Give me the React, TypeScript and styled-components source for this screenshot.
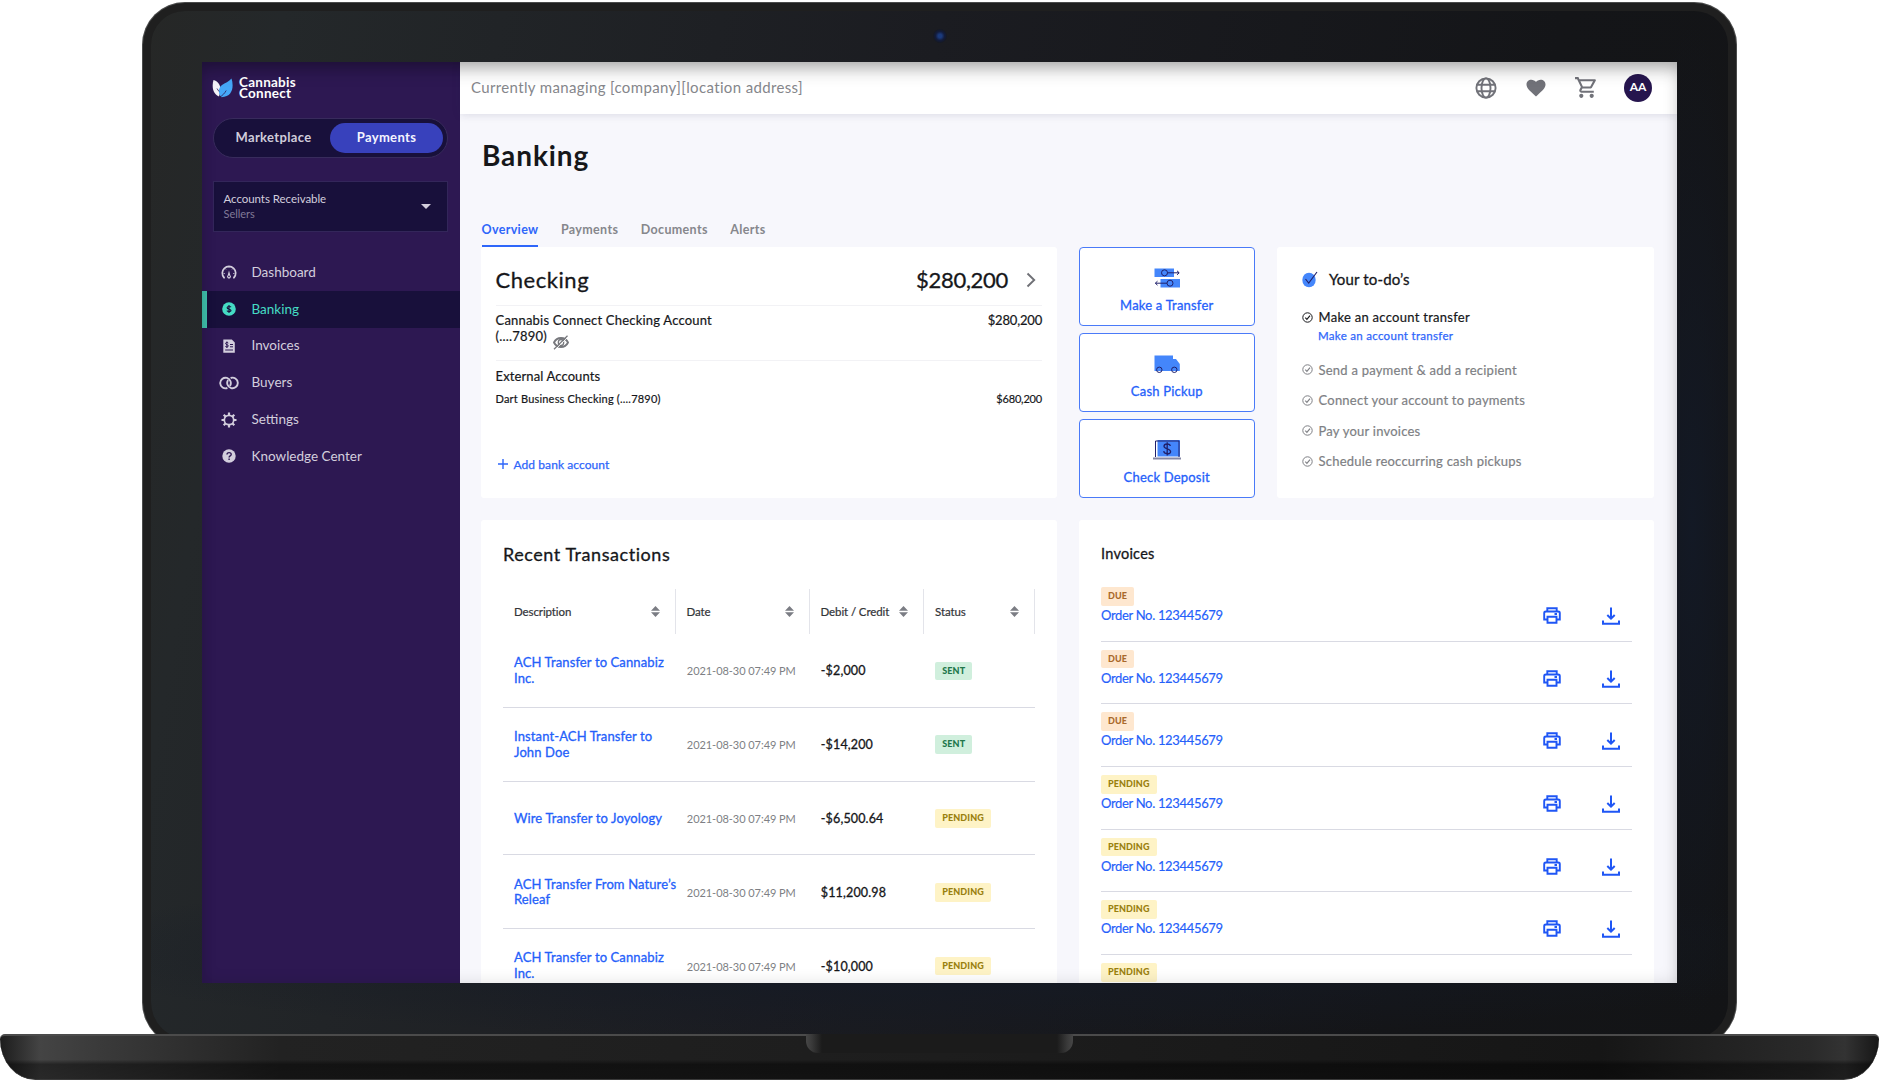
import React from 'react';
import styled, { createGlobalStyle, css } from 'styled-components';

const GlobalStyle = createGlobalStyle`
    * {
        box-sizing: border-box;
    }

    body {
        margin: 0;
        background: white;
        overflow: hidden;
        font-family: Lato, "Open Sans", sans-serif;
        color: #16171a;
    }

    h1, h2, p {
        margin: 0;
        font-weight: inherit;
    }

    svg {
        display: block;
        flex: none;
    }
`;

/* ---------- Laptop ---------- */

const Laptop = styled.div`
    width: 1879px;
    height: 1080px;
    padding-top: 2px;
    display: flex;
    flex-direction: column;
    align-items: center;
    overflow: hidden;
`;

const LidClip = styled.div`
    height: 1032px;
    overflow: hidden;
    flex: none;
`;

const Lid = styled.div`
    position: relative;
    width: 1595px;
    height: 1046px;
    padding: 59.5px 60px 0;
    border-radius: 43px 43px 46px 46px;
    background:
        radial-gradient(ellipse 900px 90px at 50% 950px, #141a26, transparent),
        radial-gradient(ellipse 60px 500px at 1550px 50%, #131925, transparent),
        linear-gradient(100deg, #262726 0%, #24282a 8%, #1b1c21 45%, #141518 80%, #131416 100%);
    box-shadow: inset 0 0 0 1px #4a4b4b, inset 0 0 0 9px #1f1f1f;
`;

const Camera = styled.div`
    position: absolute;
    left: 50%;
    top: 27px;
    width: 14px;
    height: 14px;
    margin-left: -7px;
    border-radius: 50%;
    background: radial-gradient(circle, #1b3a7c 0 18%, #131c3c 45%, #16181d 75%);
`;

const Screen = styled.div`
    position: relative;
    display: flex;
    width: 1475px;
    height: 921.5px;
    overflow: hidden;
    background: #f7f7fc;

    &::after {
        content: "";
        position: absolute;
        inset: 0;
        pointer-events: none;
        box-shadow: inset 0 15px 18px -9px rgba(0, 0, 0, 0.3), inset 0 0 16px rgba(0, 0, 0, 0.12);
    }
`;

const Base = styled.div`
    display: flex;
    justify-content: center;
    width: 1879px;
    height: 46px;
    flex: none;
    border-top: 2px solid #4b4b4b;
    border-bottom: 1px solid #3a3a3a;
    border-radius: 5px 5px 36px 36px / 5px 5px 42px 42px;
    background:
        linear-gradient(180deg, transparent 55%, rgba(0, 0, 0, 0.45) 66%, rgba(0, 0, 0, 0.4) 100%),
        linear-gradient(90deg, #1c1c1c 0, #444 40px, #3a3a3a 100px, #222 280px, #1d1d1d 50%, #161616 1600px, #2a2a2a 1810px, #333 1845px, #161616 100%);
`;

const Notch = styled.div`
    width: 267px;
    height: 19px;
    margin-top: -2px;
    border-radius: 0 0 12px 12px;
    background: linear-gradient(90deg, #474747 0, #393939 6px, #1b1b1b 16px, #1b1b1b 251px, #393939 261px, #474747 100%);
`;

/* ---------- Sidebar ---------- */

const Sidebar = styled.aside`
    width: 257.5px;
    flex: none;
    background: #2d1852;
    color: #d3cedd;
`;

const Logo = styled.div`
    display: flex;
    gap: 6px;
    padding: 16px 0 0 10px;
    height: 56px;
    color: white;
    font-size: 13.5px;
    line-height: 11px;
    font-weight: 700;
    letter-spacing: 0.25px;
`;

const LogoText = styled.div`
    margin-top: -1px;
`;

const Toggle = styled.div`
    display: flex;
    align-items: center;
    width: 235px;
    height: 40px;
    margin-left: 11px;
    padding: 0 4px 0 3px;
    border: 1px solid #382b5c;
    border-radius: 20px;
    background: #18103b;
`;

const ToggleOption = styled.div<{ $active?: boolean }>`
    flex: 1;
    height: 30px;
    border-radius: 15px;
    line-height: 29px;
    text-align: center;
    font-size: 13px;
    font-weight: 700;
    letter-spacing: 0.35px;
    color: ${({ $active }) => ($active ? '#f4f4ff' : '#d0ccda')};
    background: ${({ $active }) => ($active ? '#3841bc' : 'transparent')};
`;

const AccountSelect = styled.div`
    display: flex;
    align-items: center;
    justify-content: space-between;
    width: 235px;
    height: 51px;
    margin: 23px 0 22.5px 11px;
    padding: 0 16px 0 9.5px;
    border: 1px solid #33265a;
    background: #18103b;
    font-size: 11.5px;
    line-height: 15px;
    letter-spacing: -0.05px;

    small {
        display: block;
        font-size: 11px;
        color: #817a98;
    }
`;

const Caret = styled.span`
    border: 5px solid transparent;
    border-top-color: #d3cedd;
    border-bottom: 0;
`;

const NavItem = styled.div<{ $active?: boolean }>`
    display: flex;
    align-items: center;
    height: 36.8px;
    padding-left: 13px;
    border-left: 5px solid transparent;
    font-size: 13.5px;
    line-height: 16px;
    letter-spacing: 0;

    ${({ $active }) =>
        $active &&
        css`
            color: #45dcc4;
            background: #18103b;
            border-left-color: #3fc0ac;
        `}
`;

const NavLabel = styled.span`
    padding-bottom: 1px;
`;

const NavIcon = styled.span`
    width: 31.5px;
    padding-right: 13.5px;
    display: flex;
    justify-content: center;
`;

/* ---------- Main ---------- */

const Main = styled.main`
    flex: 1;
    min-width: 0;
`;

const TopBar = styled.header`
    display: flex;
    align-items: center;
    justify-content: space-between;
    height: 52px;
    padding: 0 25px 0 11.5px;
    background: white;
    box-shadow: 0 1px 8px rgba(40, 40, 80, 0.13);
`;

const Managing = styled.span`
    padding-bottom: 2px;
    color: #85868b;
    font-size: 15px;
    letter-spacing: 0.36px;
`;

const TopIcons = styled.div`
    display: flex;
    align-items: center;
    color: #717279;
`;

const IconSlot = styled.span`
    display: flex;
    justify-content: center;
    width: 50px;
`;

const Avatar = styled.span`
    width: 28px;
    height: 28px;
    margin-left: 13px;
    border-radius: 50%;
    background: #26154e;
    color: white;
    text-align: center;
    font-size: 12px;
    font-weight: 700;
    line-height: 26px;
`;

const Content = styled.div`
    padding: 20px 23px 0 21.5px;
`;

const PageTitle = styled.h1`
    height: 44px;
    padding-left: 1px;
    font-size: 28px;
    line-height: 43px;
    font-weight: 700;
    letter-spacing: 0.9px;
`;

const Tabs = styled.nav`
    display: flex;
    gap: 22.5px;
    margin-top: 42.5px;
    padding-left: 0.5px;
    height: 26.5px;
`;

const Tab = styled.span<{ $active?: boolean }>`
    height: 26.5px;
    border-bottom: 2px solid ${({ $active }) => ($active ? '#2e66fa' : 'transparent')};
    color: ${({ $active }) => ($active ? '#2e66fa' : '#86878c')};
    font-size: 12.5px;
    line-height: 20px;
    font-weight: 700;
    letter-spacing: 0.34px;
`;

const Card = styled.section`
    border-radius: 3px;
    background: white;
`;

const TopGrid = styled.div`
    display: grid;
    grid-template-columns: 575.5px 176.5px 377px;
    grid-template-rows: 251.5px;
    column-gap: 22px;
`;

const BottomGrid = styled.div`
    display: grid;
    grid-template-columns: 575.5px 575.5px;
    column-gap: 22px;
    margin-top: 22px;
`;

/* ---------- Checking card ---------- */

const CheckingCard = styled(Card)`
    padding: 8px 14.5px 0 14.5px;
`;

const Line = styled.div<{ $size: number }>`
    display: flex;
    justify-content: space-between;
    font-size: ${({ $size }) => $size}px;
    line-height: 16px;
    letter-spacing: 0.2px;
    -webkit-text-stroke: 0.2px currentColor;
`;

const Money = styled.span`
    letter-spacing: -0.18px;
`;

const CheckingHead = styled.div`
    display: flex;
    align-items: center;
    height: 51px;
    padding-bottom: 1px;
    border-bottom: 1px solid #f2f2f5;
    font-size: 22px;
    letter-spacing: 0.55px;
    -webkit-text-stroke: 0.3px currentColor;

    svg {
        margin: 1px 6px 0 18px;
    }
`;

const Balance = styled.span`
    margin-left: auto;
    letter-spacing: -0.3px;
`;

const AccountRow = styled.div`
    height: 55px;
    padding-top: 6.5px;
    border-bottom: 1px solid #f2f2f5;
`;

const AccountName = styled.span`
    width: 225px;
`;

const ExternalTitle = styled.h2`
    padding-top: 7.5px;
    height: 30px;
    font-size: 13px;
    line-height: 16px;
    letter-spacing: 0.12px;
    -webkit-text-stroke: 0.2px currentColor;
`;

const HiddenEye = styled.svg`
    display: inline-block;
    margin-left: 6px;
    vertical-align: -9px;
`;

const AddAccount = styled.div`
    display: flex;
    align-items: center;
    gap: 6px;
    margin-top: 50px;
    padding-left: 2px;
    color: #2e66fa;
    font-size: 12px;
    letter-spacing: 0.08px;
    -webkit-text-stroke: 0.25px currentColor;
`;

/* ---------- Actions ---------- */

const Actions = styled.div`
    display: grid;
    grid-template-rows: repeat(3, 1fr);
    gap: 6.5px;
`;

const ActionButton = styled.div`
    display: flex;
    flex-direction: column;
    align-items: center;
    padding-top: 20.5px;
    border: 1.5px solid #4a7af8;
    border-radius: 4px;
    background: white;
    color: #2460fa;
    font-size: 13px;
    line-height: 16px;
    letter-spacing: 0.2px;
    -webkit-text-stroke: 0.3px currentColor;
`;

const ActionIcon = styled.svg`
    margin-bottom: 8.5px;
`;

/* ---------- To-do's ---------- */

const TodoCard = styled(Card)`
    padding: 22.5px 25px 0;
`;

const TodoTitle = styled.h2`
    display: flex;
    align-items: center;
    gap: 11px;
    height: 20px;
    margin-bottom: 20px;
    font-size: 15px;
    letter-spacing: 0.15px;
    -webkit-text-stroke: 0.3px currentColor;
`;

const TodoItem = styled.div<{ $active?: boolean }>`
    display: flex;
    align-items: center;
    gap: 5.5px;
    height: 16px;
    margin-bottom: 14.6px;
    font-size: 13px;
    letter-spacing: ${({ $active }) => ($active ? 0.28 : 0.23)}px;
    color: ${({ $active }) => ($active ? '#16171a' : '#7e7f84')};
    -webkit-text-stroke: 0.2px currentColor;
`;

const TodoLink = styled.div`
    margin: -10.5px 0 18.5px 16px;
    height: 14px;
    color: #2e66fa;
    font-size: 11.5px;
    line-height: 14px;
    letter-spacing: 0.3px;
    -webkit-text-stroke: 0.25px currentColor;
`;

/* ---------- Transactions ---------- */

const TransactionsCard = styled(Card)`
    height: 480px;
    padding: 22px 22px 0;
`;

const CardTitle = styled.h2<{ $size: number; $spacing: number }>`
    height: 24px;
    font-size: ${({ $size }) => $size}px;
    line-height: 24px;
    letter-spacing: ${({ $spacing }) => $spacing}px;
    -webkit-text-stroke: 0.3px currentColor;
`;

const TableRow = styled.div`
    display: grid;
    grid-template-columns: 172.5px 134px 114.5px 110.5px;
    align-items: center;
    height: 73.8px;
    padding-top: 1px;
    border-bottom: 1.5px solid #d9dae3;
`;

const TableHead = styled(TableRow)`
    height: 45px;
    margin-top: 23px;
    padding-top: 0;
    border-bottom: 0;
`;

const HeadCell = styled.div`
    display: flex;
    align-items: center;
    justify-content: space-between;
    height: 45px;
    padding: 0 15px 0 11px;
    border-right: 1px solid #e3e4ea;
    font-size: 11.5px;
    letter-spacing: -0.1px;
    color: #333438;
    -webkit-text-stroke: 0.2px currentColor;
`;

const Cell = styled.div`
    padding-left: 11.3px;
    font-size: 12.5px;
    white-space: nowrap;
    letter-spacing: 0.15px;
    -webkit-text-stroke: 0.3px currentColor;
`;

const LinkCell = styled(Cell)`
    padding-left: 11px;
    font-size: 13px;
    line-height: 15.6px;
    color: #2460fa;
    white-space: pre;
    letter-spacing: 0.12px;
`;

const DateCell = styled(Cell)`
    font-size: 11px;
    color: #7e7f84;
    letter-spacing: -0.05px;
    -webkit-text-stroke: 0;
`;

type BadgeKind = 'SENT' | 'PENDING' | 'DUE';

const badgeColors: Record<BadgeKind, [string, string]> = {
    SENT: ['#d0efdd', '#22774a'],
    PENDING: ['#fef3c6', '#9a800e'],
    DUE: ['#fee7cf', '#a9692b'],
};

const Badge = styled.span<{ $kind: BadgeKind }>`
    display: inline-block;
    height: 18.5px;
    padding: 0 7px;
    border-radius: 2px;
    font-size: 9px;
    line-height: 18px;
    font-weight: 900;
    letter-spacing: 0.1px;
    -webkit-text-stroke: 0;
    background: ${({ $kind }) => badgeColors[$kind][0]};
    color: ${({ $kind }) => badgeColors[$kind][1]};
`;

/* ---------- Invoices ---------- */

const InvoicesCard = styled(Card)`
    height: 480px;
    padding: 21.5px 22px 0 22.5px;
`;

const InvoiceList = styled.div`
    margin-top: 13.5px;
`;

const InvoiceRow = styled.div`
    display: flex;
    align-items: flex-start;
    height: 62.7px;
    padding-top: 8px;
    border-bottom: 1.5px solid #d9dae3;
`;

const InvoiceInfo = styled.div`
    display: flex;
    flex-direction: column;
    align-items: flex-start;
    flex: 1;
`;

const OrderLink = styled.span`
    margin-top: 1.5px;
    font-size: 13px;
    line-height: 17px;
    letter-spacing: -0.33px;
    color: #2460fa;
    -webkit-text-stroke: 0.15px currentColor;
`;

const RowIcons = styled.div`
    display: flex;
    gap: 41px;
    padding: 20px 12.5px 0 0;
    color: #1f56f5;
`;

/* ---------- Icons ---------- */

const LeafLogo = () => (
    <svg width="21" height="20" viewBox="0 0 21 20">
        <path d="M1.5 2C6 3.5 9 7 8.5 13L7 18.5C1 16 -.5 9 1.5 2Z" fill="#f4f2f8" />
        <path d="M19.5 0.5C22 8 21 19 9.5 19.2C6 16 6 10 10 7C13 5 17 3.5 19.5.5Z" fill="#45a7f8" />
        <path d="M8 19C10.5 17.5 12.5 15.5 14.2 12.5M5 10.5L7 13.5" stroke="#2d1852" strokeWidth=".8" fill="none" />
    </svg>
);

const DashboardIcon = () => (
    <svg width="16" height="16" viewBox="0 0 16 16" fill="none" stroke="currentColor">
        <path d="M3.9 13.6H3A6.7 6.7 0 1 1 13 13.6H12.1" strokeWidth="1.7" />
        <path d="M2.5 9.5H4M12 9.5H13.5M4 4.5L5 5.5M12 4.5L11 5.5M8 2.5V4" strokeWidth=".7" />
        <path d="M8 6.5L9.3 11.2A1.9 1.9 0 1 1 6.7 11.2Z" fill="currentColor" stroke="none" />
        <circle cx="8" cy="12.4" r=".8" fill="#2d1852" stroke="none" />
    </svg>
);

const DollarIcon = () => (
    <svg width="14" height="14" viewBox="0 0 14 14">
        <circle cx="7" cy="7" r="6.8" fill="currentColor" />
        <path d="M9 5.2C8.7 4.3 5.1 4 5.1 5.7S9 7 9 8.5S5.2 9.7 5 8.7M7 3V11" stroke="#18103b" strokeWidth="1.1" fill="none" />
    </svg>
);

const InvoiceIcon = () => (
    <svg width="12" height="14" viewBox="0 0 12 14">
        <path d="M.3.5H8.8L11.8 3.5V13.7H.3Z" fill="currentColor" />
        <path d="M5.3 4C5 3.2 2.5 3.2 2.5 4.5S5.4 5.6 5.4 6.9S2.7 8.3 2.3 7.3M3.9 2.5V9M7 5.5H10M7 7.8H10M2.2 11H10" stroke="#2d1852" strokeWidth="1" fill="none" />
    </svg>
);

const BuyersIcon = () => (
    <svg width="20" height="14" viewBox="0 0 20 14" fill="none" stroke="currentColor" strokeWidth="1.9">
        <path d="M8.4 12A5.3 5.3 0 1 1 10.9 10" />
        <path d="M11.6 2A5.3 5.3 0 1 1 9.1 4" />
    </svg>
);

const SettingsIcon = () => (
    <svg width="16" height="16" viewBox="0 0 16 16" fill="none" stroke="currentColor">
        <circle cx="8" cy="8" r="4.7" strokeWidth="1.7" />
        <path d="M8 .5V3M8 13V15.5M.5 8H3M13 8H15.5M2.7 2.7L4.5 4.5M11.5 11.5L13.3 13.3M13.3 2.7L11.5 4.5M4.5 11.5L2.7 13.3" strokeWidth="2.2" />
    </svg>
);

const HelpIcon = () => (
    <svg width="14" height="14" viewBox="0 0 14 14">
        <circle cx="7" cy="7" r="6.7" fill="currentColor" />
        <path d="M5 5.5C5 3 9.2 3 9.2 5.4C9.2 7 7.1 6.8 7.1 8.5M7.1 9.5V11" stroke="#2d1852" strokeWidth="1.4" fill="none" />
    </svg>
);

const GlobeIcon = () => (
    <svg width="22" height="22" viewBox="0 0 22 22" fill="none" stroke="currentColor" strokeWidth="1.9">
        <circle cx="11" cy="11" r="9.6" />
        <ellipse cx="11" cy="11" rx="4.5" ry="9.6" />
        <path d="M2 7.7H20M2 14.3H20" />
    </svg>
);

const HeartIcon = () => (
    <svg width="20" height="18" viewBox="0 0 20 18">
        <path d="M10 17.5L8.6 16.2C3.6 11.7.5 8.9.5 5.5C.5 2.7 2.7.8 5.3.8C7.2.8 9 1.7 10 3.1C11 1.7 12.8.8 14.7.8C17.3.8 19.5 2.7 19.5 5.5C19.5 8.9 16.4 11.7 11.4 16.2Z" fill="currentColor" />
    </svg>
);

const CartIcon = () => (
    <svg width="25" height="25" viewBox="0 0 24 24" fill="currentColor">
        <path d="M15.55 13c.75 0 1.41-.41 1.75-1.03l3.58-6.49A.996.996 0 0 0 20.01 4H5.21l-.94-2H1v2h2l3.6 7.59-1.35 2.44C4.52 15.37 5.48 17 7 17h12v-2H7l1.1-2h7.45zM6.16 6h12.15l-2.76 5H8.53L6.16 6zM7 18c-1.1 0-1.99.9-1.99 2S5.9 22 7 22s2-.9 2-2-.9-2-2-2zm10 0c-1.1 0-1.99.9-1.99 2s.89 2 1.99 2 2-.9 2-2-.9-2-2-2z" />
    </svg>
);

const ChevronIcon = () => (
    <svg width="10" height="16" viewBox="0 0 10 16" fill="none" stroke="#6f7076" strokeWidth="1.9">
        <path d="M1.5 1.5L8.2 8L1.5 14.5" />
    </svg>
);

const EyeOffIcon = () => (
    <HiddenEye width="16" height="15" viewBox="0 0 16 15" fill="none" stroke="#77787d">
        <path d="M1 7.5C4 1.5 12 1.5 15 7.5C12 13.5 4 13.5 1 7.5Z" strokeWidth="1.9" />
        <ellipse cx="8" cy="7.5" rx="2.7" ry="3" strokeWidth="1.3" />
        <path d="M1 14.3L14.5 .7" strokeWidth="1.3" />
        <path d="M2.2 14.8L15.5 1.5" stroke="white" strokeWidth=".8" />
    </HiddenEye>
);

const PlusIcon = () => (
    <svg width="10" height="10" viewBox="0 0 10 10" stroke="currentColor" strokeWidth="1.4">
        <path d="M5 0V10M0 5H10" />
    </svg>
);

const TransferIcon = () => (
    <ActionIcon width="26" height="20" viewBox="0 0 26 20" fill="none" stroke="#20206b" strokeWidth="1">
        <path d="M.5 .5H20V9H.5ZM6.5 11H26V19.5H6.5Z" fill="#4486fb" stroke="none" />
        <circle cx="10.5" cy="4.8" r="3" />
        <circle cx="16" cy="15.2" r="3" />
        <path d="M13.5 4.8H25M23 2.8L25.2 4.8L23 6.8M13 15.2H1.5M3.5 13.2L1.3 15.2L3.5 17.2" />
    </ActionIcon>
);

const TruckIcon = () => (
    <ActionIcon width="26" height="20" viewBox="0 0 26 20" fill="none">
        <path d="M.5 1.5H19V5H22L25.8 10V17H.5Z" fill="#4486fb" />
        <circle cx="5.3" cy="15.8" r="2.7" stroke="#20206b" />
        <circle cx="20.3" cy="15.8" r="2.7" stroke="#20206b" />
    </ActionIcon>
);

const DepositIcon = () => (
    <ActionIcon width="28" height="20" viewBox="0 0 28 20" fill="none">
        <path d="M4.5 0H27V16.5H4.5Z" fill="#4486fb" />
        <path d="M2.5 17V1H26V17" stroke="#20206b" strokeWidth="1" />
        <path d="M0 18.5H28" stroke="#8587a4" strokeWidth="2" />
        <path d="M17.3 6C16.9 3.3 11 3.3 11 6.2S17.6 8.7 17.6 11.7S11.1 14.3 10.7 11.2M14.2 2.3V15.5" stroke="#20206b" strokeWidth="1.3" />
    </ActionIcon>
);

const TodoIcon = () => (
    <svg width="16" height="17" viewBox="0 0 16 17" fill="none">
        <ellipse cx="7" cy="9" rx="6.7" ry="7.3" fill="#4486fb" />
        <path d="M3.5 8L6.7 12L15 1" stroke="#20206b" strokeWidth="1.1" />
    </svg>
);

const CheckCircleIcon = () => (
    <svg width="11" height="11" viewBox="0 0 11 11" fill="none" stroke="currentColor" strokeWidth="1">
        <circle cx="5.5" cy="5.5" r="4.7" />
        <path d="M3.3 5.7L4.9 7.3L8 3.7" strokeWidth="1.2" />
    </svg>
);

const SortIcon = () => (
    <svg width="9" height="11" viewBox="0 0 9 11" fill="#7b7d84">
        <path d="M4.5 0L9 4.7H0ZM4.5 11L0 6.3H9Z" />
    </svg>
);

const PrinterIcon = () => (
    <svg width="18" height="17" viewBox="0 0 18 17" fill="none" stroke="currentColor" strokeWidth="1.9">
        <path d="M4.3 4.5V1.2H13.7V4.5M4.3 12.5H1.2V6Q1.2 4.5 3 4.5H15Q16.8 4.5 16.8 6V12.5H13.7" />
        <path d="M4.5 9.7H13.5V15.8H4.5ZM11.5 7H14" />
    </svg>
);

const DownloadIcon = () => (
    <svg width="18" height="18" viewBox="0 0 18 18" fill="none" stroke="currentColor" strokeWidth="2">
        <path d="M9 .5V11.5M5.3 8L9 11.7L12.7 8M1 13.5V16.7H17V13.5" />
    </svg>
);

const navItems = [
    { label: 'Dashboard', icon: <DashboardIcon /> },
    { label: 'Banking', icon: <DollarIcon />, active: true },
    { label: 'Invoices', icon: <InvoiceIcon /> },
    { label: 'Buyers', icon: <BuyersIcon /> },
    { label: 'Settings', icon: <SettingsIcon /> },
    { label: 'Knowledge Center', icon: <HelpIcon /> },
];

const tabs = ['Overview', 'Payments', 'Documents', 'Alerts'];

const actions = [
    { label: 'Make a Transfer', icon: <TransferIcon /> },
    { label: 'Cash Pickup', icon: <TruckIcon /> },
    { label: 'Check Deposit', icon: <DepositIcon /> },
];

const todos = [
    'Send a payment & add a recipient',
    'Connect your account to payments',
    'Pay your invoices',
    'Schedule reoccurring cash pickups',
];

const columns = ['Description', 'Date', 'Debit / Credit', 'Status'];

const transactions: { name: string; amount: string; status: BadgeKind }[] = [
    { name: 'ACH Transfer to Cannabiz\nInc.', amount: '-$2,000', status: 'SENT' },
    { name: 'Instant-ACH Transfer to\nJohn Doe', amount: '-$14,200', status: 'SENT' },
    { name: 'Wire Transfer to Joyology', amount: '-$6,500.64', status: 'PENDING' },
    { name: 'ACH Transfer From Nature’s\nReleaf', amount: '$11,200.98', status: 'PENDING' },
    { name: 'ACH Transfer to Cannabiz\nInc.', amount: '-$10,000', status: 'PENDING' },
];

const invoices: BadgeKind[] = ['DUE', 'DUE', 'DUE', 'PENDING', 'PENDING', 'PENDING', 'PENDING'];

export default function App() {
    return (
        <Laptop>
            <GlobalStyle />
            <LidClip>
                <Lid>
                    <Camera />
                    <Screen>
                        <Sidebar>
                            <Logo>
                                <LeafLogo />
                                <LogoText>
                                    Cannabis
                                    <br />
                                    Connect
                                </LogoText>
                            </Logo>
                            <Toggle>
                                <ToggleOption>Marketplace</ToggleOption>
                                <ToggleOption $active>Payments</ToggleOption>
                            </Toggle>
                            <AccountSelect>
                                <div>
                                    Accounts Receivable
                                    <small>Sellers</small>
                                </div>
                                <Caret />
                            </AccountSelect>
                            {navItems.map((item) => (
                                <NavItem key={item.label} $active={item.active}>
                                    <NavIcon>{item.icon}</NavIcon>
                                    <NavLabel>{item.label}</NavLabel>
                                </NavItem>
                            ))}
                        </Sidebar>
                        <Main>
                            <TopBar>
                                <Managing>Currently managing [company][location address]</Managing>
                                <TopIcons>
                                    <IconSlot><GlobeIcon /></IconSlot>
                                    <IconSlot><HeartIcon /></IconSlot>
                                    <IconSlot><CartIcon /></IconSlot>
                                    <Avatar>AA</Avatar>
                                </TopIcons>
                            </TopBar>
                            <Content>
                                <PageTitle>Banking</PageTitle>
                                <Tabs>
                                    {tabs.map((tab, index) => (
                                        <Tab key={tab} $active={index === 0}>{tab}</Tab>
                                    ))}
                                </Tabs>
                                <TopGrid>
                                    <CheckingCard>
                                        <CheckingHead>
                                            Checking
                                            <Balance>$280,200</Balance>
                                            <ChevronIcon />
                                        </CheckingHead>
                                        <AccountRow>
                                            <Line $size={13}>
                                                <AccountName>
                                                    Cannabis Connect Checking Account (....7890)
                                                    <EyeOffIcon />
                                                </AccountName>
                                                <Money>$280,200</Money>
                                            </Line>
                                        </AccountRow>
                                        <ExternalTitle>External Accounts</ExternalTitle>
                                        <Line $size={11}>
                                            <span>Dart Business Checking (....7890)</span>
                                            <Money>$680,200</Money>
                                        </Line>
                                        <AddAccount>
                                            <PlusIcon />
                                            Add bank account
                                        </AddAccount>
                                    </CheckingCard>
                                    <Actions>
                                        {actions.map((action) => (
                                            <ActionButton key={action.label}>
                                                {action.icon}
                                                {action.label}
                                            </ActionButton>
                                        ))}
                                    </Actions>
                                    <TodoCard>
                                        <TodoTitle>
                                            <TodoIcon />
                                            Your to-do’s
                                        </TodoTitle>
                                        <TodoItem $active>
                                            <CheckCircleIcon />
                                            Make an account transfer
                                        </TodoItem>
                                        <TodoLink>Make an account transfer</TodoLink>
                                        {todos.map((todo) => (
                                            <TodoItem key={todo}>
                                                <CheckCircleIcon />
                                                {todo}
                                            </TodoItem>
                                        ))}
                                    </TodoCard>
                                </TopGrid>
                                <BottomGrid>
                                    <TransactionsCard>
                                        <CardTitle $size={18} $spacing={0.55}>Recent Transactions</CardTitle>
                                        <TableHead>
                                            {columns.map((column) => (
                                                <HeadCell key={column}>
                                                    {column}
                                                    <SortIcon />
                                                </HeadCell>
                                            ))}
                                        </TableHead>
                                        {transactions.map((transaction, index) => (
                                            <TableRow key={index}>
                                                <LinkCell>{transaction.name}</LinkCell>
                                                <DateCell>2021-08-30 07:49 PM</DateCell>
                                                <Cell>{transaction.amount}</Cell>
                                                <Cell>
                                                    <Badge $kind={transaction.status}>{transaction.status}</Badge>
                                                </Cell>
                                            </TableRow>
                                        ))}
                                    </TransactionsCard>
                                    <InvoicesCard>
                                        <CardTitle $size={14.5} $spacing={0.25}>Invoices</CardTitle>
                                        <InvoiceList>
                                            {invoices.map((kind, index) => (
                                                <InvoiceRow key={index}>
                                                    <InvoiceInfo>
                                                        <Badge $kind={kind}>{kind}</Badge>
                                                        <OrderLink>Order No. 123445679</OrderLink>
                                                    </InvoiceInfo>
                                                    <RowIcons>
                                                        <PrinterIcon />
                                                        <DownloadIcon />
                                                    </RowIcons>
                                                </InvoiceRow>
                                            ))}
                                        </InvoiceList>
                                    </InvoicesCard>
                                </BottomGrid>
                            </Content>
                        </Main>
                    </Screen>
                </Lid>
            </LidClip>
            <Base>
                <Notch />
            </Base>
        </Laptop>
    );
}
